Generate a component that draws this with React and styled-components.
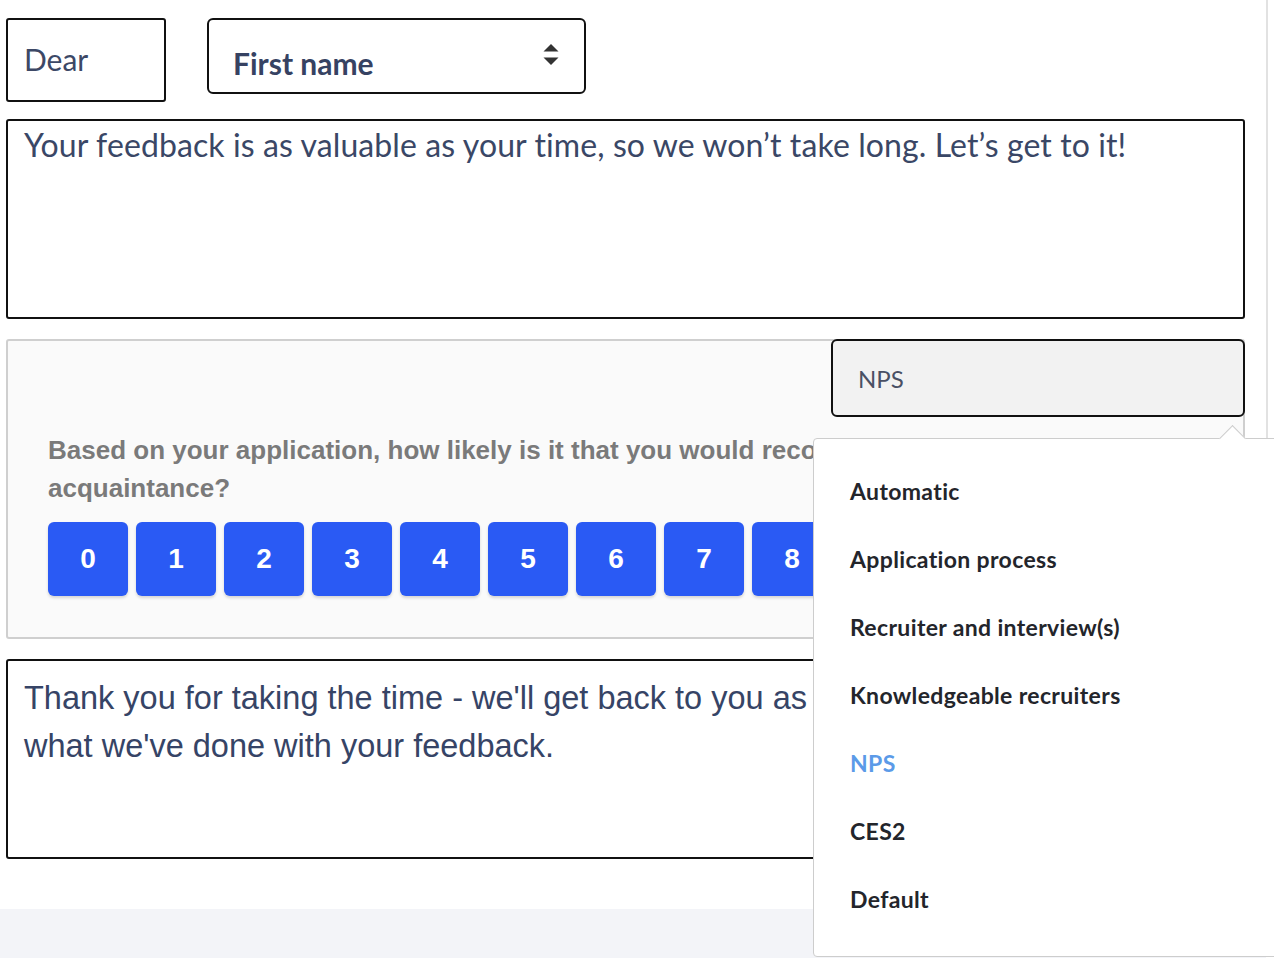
import styled, { createGlobalStyle } from 'styled-components';

const GlobalStyle = createGlobalStyle`
  html, body {
    margin: 0;
    padding: 0;
    background: #ffffff;
    overflow: hidden;
  }
  * {
    box-sizing: border-box;
  }
`;

const SCORES = [0, 1, 2, 3, 4, 5, 6, 7, 8, 9, 10];

const TEMPLATES = [
  'Automatic',
  'Application process',
  'Recruiter and interview(s)',
  'Knowledgeable recruiters',
  'NPS',
  'CES2',
  'Default',
];

const SortIcon = () => (
  <svg width="16" height="22" viewBox="0 0 16 22">
    <path d="M8 0 L15.5 7.5 L0.5 7.5 Z" fill="#333" />
    <path d="M0.5 13.5 L15.5 13.5 L8 21 Z" fill="#333" />
  </svg>
);

const App = () => {
  return (
    <Page>
      <GlobalStyle />
      <Main>
        <GreetingRow>
          <DearBox>Dear</DearBox>
          <NameSelect>
            <span>First name</span>
            <SortIcon />
          </NameSelect>
        </GreetingRow>

        <TextBlock>
          Your feedback is as valuable as your time, so we won’t take long. Let’s get to it!
        </TextBlock>

        <SurveyCard>
          <TypeSelect>
            NPS
            <Dropdown>
              {TEMPLATES.map((t) => (
                <DropItem key={t} active={t === 'NPS'}>{t}</DropItem>
              ))}
            </Dropdown>
          </TypeSelect>
          <Question>
            Based on your application, how likely is it that you would recommend us to a friend or an
            acquaintance?
          </Question>
          <ScoreRow>
            {SCORES.map((n) => (
              <ScoreButton key={n}>{n}</ScoreButton>
            ))}
          </ScoreRow>
        </SurveyCard>

        <ClosingBlock>
          <Line>Thank you for taking the time - we'll get back to you as soon as we can to share</Line>
          <Line>what we've done with your feedback.</Line>
        </ClosingBlock>
      </Main>
      <Footer />
    </Page>
  );
};

const Page = styled.div`
  width: 1274px;
  height: 958px;
  display: flex;
  flex-direction: column;
  overflow: hidden;
`;

const Main = styled.div`
  width: 1268px;
  height: 909px;
  padding: 18px 21px 0 6px;
  border-right: 2px solid #e2e2e2;
  display: flex;
  flex-direction: column;
`;

const GreetingRow = styled.div`
  display: flex;
  align-items: flex-start;
  gap: 41px;
`;

const DearBox = styled.div`
  width: 160px;
  height: 84px;
  border: 2px solid #111;
  border-radius: 3px;
  padding: 21px 0 0 16px;
  font-family: 'Lato', 'Open Sans', sans-serif;
  font-size: 30px;
  color: #3c4866;
`;

const NameSelect = styled.div`
  width: 379px;
  height: 76px;
  border: 2px solid #111;
  border-radius: 6px;
  padding: 0 25px 0 24px;
  display: flex;
  align-items: center;
  justify-content: space-between;
  font-family: 'Lato', 'Open Sans', sans-serif;
  font-weight: 700;
  font-size: 30px;
  color: #364262;

  span {
    margin-top: 14px;
  }

  svg {
    margin-top: -2px;
  }
`;

const TextBlock = styled.div`
  margin-top: 17px;
  height: 200px;
  border: 2px solid #111;
  border-radius: 3px;
  padding: 4px 16px;
  font-family: 'Lato', 'Open Sans', sans-serif;
  font-size: 32px;
  line-height: 40px;
  letter-spacing: 0.1px;
  color: #3a4766;
`;

const SurveyCard = styled.div`
  margin-top: 20px;
  height: 300px;
  border: 2px solid #cfcfcf;
  border-radius: 3px;
  background: #fafafa;
  display: flex;
  flex-direction: column;
  padding: 0 0 0 40px;
`;

const TypeSelect = styled.div`
  position: relative;
  align-self: flex-end;
  margin: -2px -2px 0 0;
  width: 414px;
  height: 78px;
  border: 2px solid #111;
  border-radius: 6px;
  background: #f2f2f2;
  display: flex;
  align-items: center;
  padding-left: 25px;
  font-family: 'Lato', 'Open Sans', sans-serif;
  font-size: 24px;
  color: #4a5064;
`;

const Dropdown = styled.ul`
  position: absolute;
  left: -20px;
  top: 97px;
  width: 480px;
  height: 519px;
  margin: 0;
  padding: 18px 0 0 0;
  list-style: none;
  background: #fff;
  border: 1px solid #cdcdcd;
  border-radius: 4px;
  z-index: 5;

  &::before {
    content: '';
    position: absolute;
    left: 409px;
    top: -10px;
    width: 18px;
    height: 18px;
    background: #fff;
    border-top: 1px solid #cdcdcd;
    border-left: 1px solid #cdcdcd;
    transform: rotate(45deg);
  }
`;

const DropItem = styled.li`
  height: 68px;
  display: flex;
  align-items: center;
  padding-left: 36px;
  font-family: 'Lato', 'Open Sans', sans-serif;
  font-weight: 700;
  font-size: 23px;
  letter-spacing: 0.35px;
  color: ${(p) => (p.active ? '#5b9ae8' : '#23252b')};
`;

const Question = styled.p`
  margin: 14px 0 0 0;
  font-family: 'Liberation Sans', Arial, sans-serif;
  font-weight: 700;
  font-size: 26px;
  line-height: 38px;
  color: #7a7a7a;
`;

const ScoreRow = styled.div`
  margin-top: 15px;
  display: flex;
  gap: 8px;
`;

const ScoreButton = styled.div`
  flex: none;
  width: 80px;
  height: 74px;
  border-radius: 6px;
  background: #2a5af4;
  box-shadow: 0 2px 3px rgba(0, 0, 0, 0.15);
  display: flex;
  align-items: center;
  justify-content: center;
  font-family: 'Liberation Sans', Arial, sans-serif;
  font-weight: 700;
  font-size: 28px;
  color: #fff;
`;

const ClosingBlock = styled.div`
  margin-top: 20px;
  height: 200px;
  border: 2px solid #111;
  border-radius: 3px;
  padding: 13px 16px;
  font-family: 'Liberation Sans', Arial, sans-serif;
  font-size: 32.5px;
  line-height: 48px;
  color: #364466;
`;

const Line = styled.div`
  white-space: nowrap;
`;

const Footer = styled.div`
  width: 1266px;
  flex: 1;
  background: #f3f4f8;
`;

export default App;
